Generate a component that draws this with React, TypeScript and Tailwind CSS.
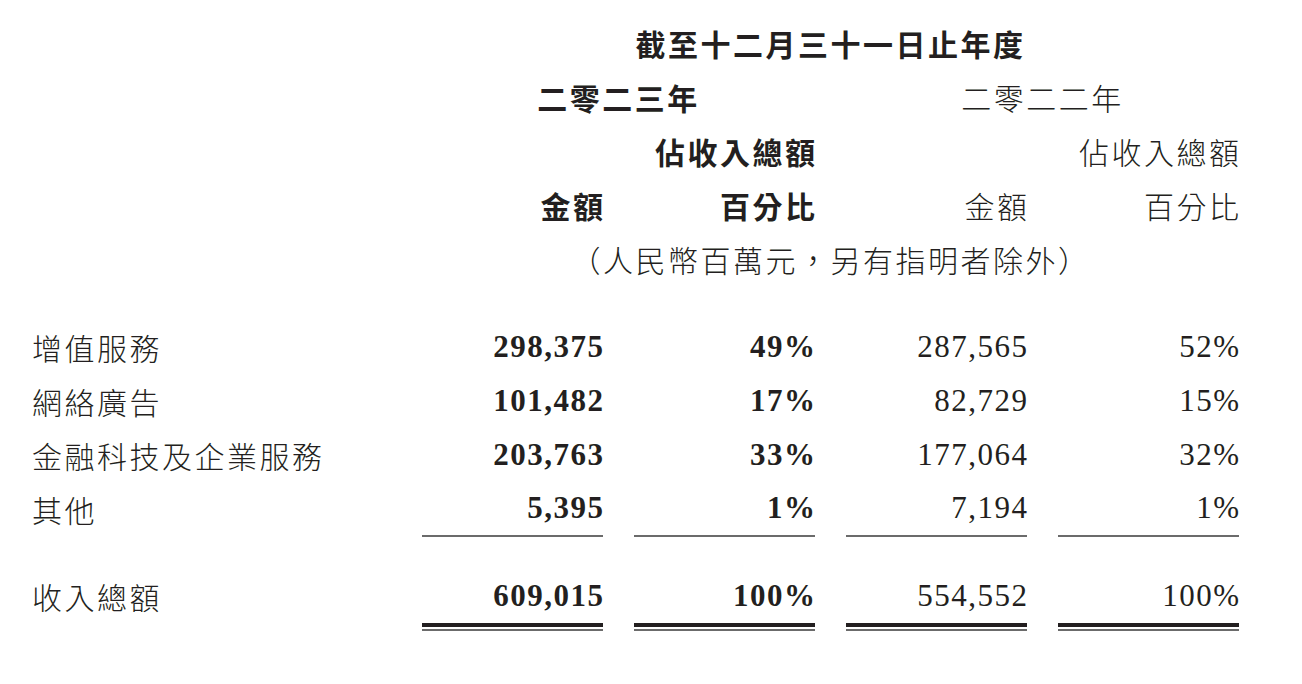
const cjk = "font-['Noto_Sans_CJK_TC',sans-serif]";
const num = "font-['Liberation_Serif','Times_New_Roman',serif]";
const grid = "grid grid-cols-[391px_181px_181px_181px_181px] gap-x-[31px]";

const rows = [
  { label: "增值服務", a: "298,375", ap: "49%", b: "287,565", bp: "52%" },
  { label: "網絡廣告", a: "101,482", ap: "17%", b: "82,729", bp: "15%" },
  { label: "金融科技及企業服務", a: "203,763", ap: "33%", b: "177,064", bp: "32%" },
  { label: "其他", a: "5,395", ap: "1%", b: "7,194", bp: "1%" },
];

function HeadCell({ children, bold, className = "" }: { children: React.ReactNode; bold?: boolean; className?: string }) {
  return (
    <div
      className={`flex h-[54px] items-center text-[30px] leading-none tracking-[2.5px] ${cjk} ${
        bold ? "font-bold" : "font-light"
      } ${className}`}
    >
      {children}
    </div>
  );
}

function NumCell({ value, bold, line }: { value: string; bold?: boolean; line?: boolean }) {
  return (
    <div
      className={`flex h-[54px] items-center justify-end pb-[3px] text-[31px] leading-none tracking-[1.5px] ${num} ${
        bold ? "font-bold" : "font-normal"
      } ${line ? "border-b-2 border-[#6b6b6b]" : ""}`}
    >
      <span className="-mr-[1.5px]">{value}</span>
    </div>
  );
}

function TotalCell({ value, bold }: { value: string; bold?: boolean }) {
  return (
    <div className="flex flex-col">
      <div
        className={`flex h-[53px] items-center justify-end pb-[2px] text-[31px] leading-none tracking-[1.5px] ${num} ${
          bold ? "font-bold" : "font-normal"
        }`}
      >
        <span className="-mr-[1.5px]">{value}</span>
      </div>
      <div className="h-[4px] bg-[#231f20]" />
      <div className="mt-[2px] h-[2px] bg-[#6b6b6b]" />
    </div>
  );
}

export default function App() {
  return (
    <div className="min-h-screen w-full bg-white pt-[16px] text-[#231f20]">
      <div className={grid}>
        <HeadCell bold className="col-span-4 col-start-2 justify-center">
          截至十二月三十一日止年度
        </HeadCell>

        <HeadCell bold className="col-span-2 col-start-2 justify-center">
          二零二三年
        </HeadCell>
        <HeadCell className="col-span-2 col-start-4 justify-center">二零二二年</HeadCell>

        <HeadCell bold className="col-start-3 justify-end">
          <span className="-mr-[2.5px]">佔收入總額</span>
        </HeadCell>
        <HeadCell className="col-start-5 justify-end">
          <span className="-mr-[2.5px]">佔收入總額</span>
        </HeadCell>

        <HeadCell bold className="col-start-2 justify-end">
          <span className="-mr-[2.5px]">金額</span>
        </HeadCell>
        <HeadCell bold className="justify-end">
          <span className="-mr-[2.5px]">百分比</span>
        </HeadCell>
        <HeadCell className="justify-end">
          <span className="-mr-[2.5px]">金額</span>
        </HeadCell>
        <HeadCell className="justify-end">
          <span className="-mr-[2.5px]">百分比</span>
        </HeadCell>

        <HeadCell className="col-span-4 col-start-2 justify-center">
          （人民幣百萬元，另有指明者除外）
        </HeadCell>
      </div>

      <div className={`${grid} mt-[35px]`}>
        {rows.map((r, i) => {
          const last = i === rows.length - 1;
          return (
            <div key={r.label} className="contents">
              <HeadCell className="pb-[3px] pl-[32px]">{r.label}</HeadCell>
              <NumCell value={r.a} bold line={last} />
              <NumCell value={r.ap} bold line={last} />
              <NumCell value={r.b} line={last} />
              <NumCell value={r.bp} line={last} />
            </div>
          );
        })}
      </div>

      <div className={`${grid} mt-[33px]`}>
        <div className={`flex h-[53px] items-center pb-[2px] pl-[32px] text-[30px] font-light leading-none tracking-[2.5px] ${cjk}`}>
          收入總額
        </div>
        <TotalCell value="609,015" bold />
        <TotalCell value="100%" bold />
        <TotalCell value="554,552" />
        <TotalCell value="100%" />
      </div>
    </div>
  );
}
